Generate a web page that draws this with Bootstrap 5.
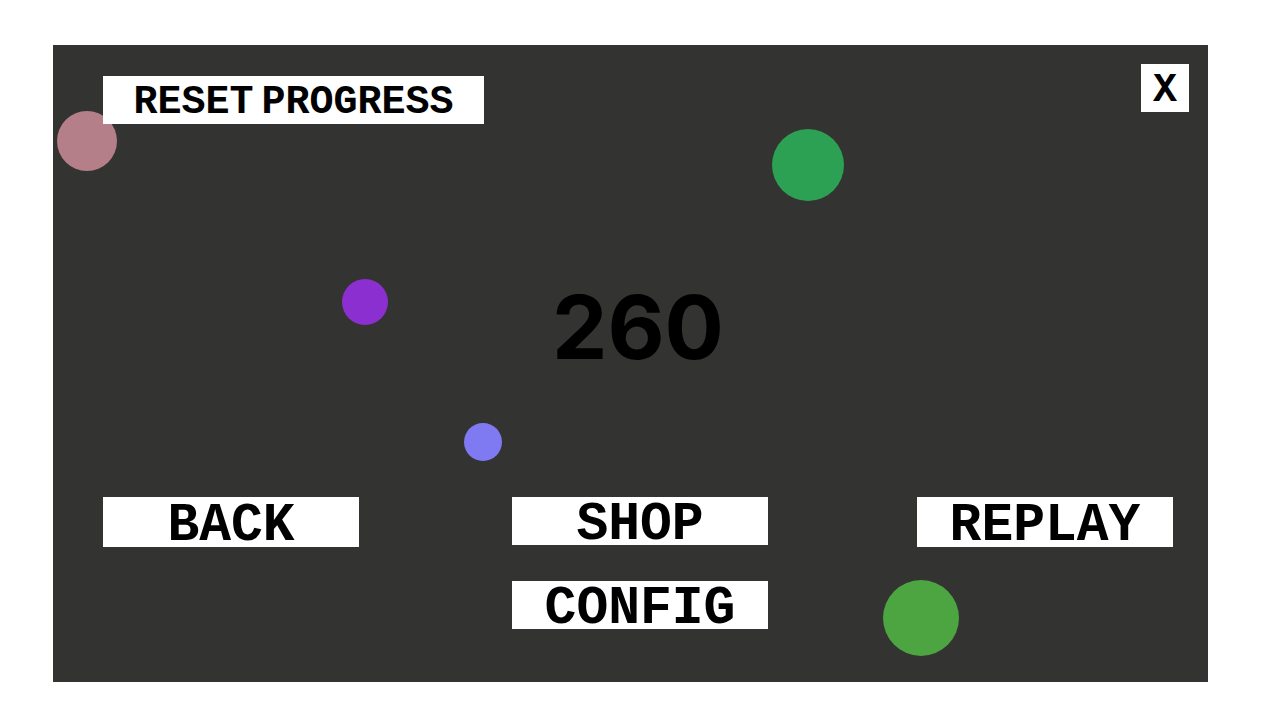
<!DOCTYPE html>
<html lang="en">
<head>
<meta charset="utf-8">
<meta name="viewport" content="width=device-width, initial-scale=1">
<title>Score</title>
<link href="https://cdn.jsdelivr.net/npm/bootstrap@5.3.0/dist/css/bootstrap.min.css" rel="stylesheet">
<style>
  .page { padding: 45px 72px 38px 53px; background: #fff; }
  .stage { background: #333331; }
  .stage-top { padding: 19px 19px 0 50px; }
  .stage-score { padding: 32px 35px 0 50px; }
  .stage-menu { padding: 0 35px 53px 50px; }
  .game-btn {
    --bs-btn-color: #000; --bs-btn-bg: #fff;
    --bs-btn-hover-color: #000; --bs-btn-hover-bg: #e4e4e4;
    --bs-btn-active-color: #000; --bs-btn-active-bg: #d0d0d0;
    height: 48px; padding: 6px 0 0; border: 0; border-radius: 0;
    font: 700 40px/40px "Liberation Mono", monospace;
    white-space: nowrap;
  }
  .btn-menu { width: 256px; font-size: 53px; padding-top: 8px; }
  .btn-tall { height: 50px; }
  .btn-reset { width: 381px; margin-top: 12px; }
  .btn-close-game { width: 48px; }
  .menu-middle { gap: 36px; }
  .score { font: 700 88px/88px Inter, sans-serif; color: #000; }
</style>
</head>
<body>
<div class="page d-flex min-vh-100">
  <main class="stage position-relative d-flex flex-column flex-grow-1">
    <svg class="position-absolute top-0 start-0 w-100 h-100" viewBox="0 0 1155 637" aria-hidden="true">
      <circle cx="34" cy="96" r="30" fill="#b57f8a"/>
      <circle cx="755" cy="120" r="36" fill="#2ca154"/>
      <circle cx="312" cy="257" r="23" fill="#8c2fd0"/>
      <circle cx="430" cy="397" r="19" fill="#7f7af2"/>
      <circle cx="868" cy="573" r="38" fill="#4ca540"/>
    </svg>
    <header class="stage-top position-relative d-flex justify-content-between align-items-start">
      <button type="button" class="btn game-btn btn-reset d-flex justify-content-center align-items-center gap-2"><span>RESET</span> <span>PROGRESS</span></button>
      <button type="button" class="btn game-btn btn-close-game d-flex justify-content-center align-items-center">X</button>
    </header>
    <div class="stage-score position-relative d-flex flex-grow-1 justify-content-center align-items-center">
      <output class="score">260</output>
    </div>
    <nav class="stage-menu position-relative d-flex justify-content-between align-items-start">
      <button type="button" class="btn game-btn btn-menu btn-tall d-flex justify-content-center align-items-center">BACK</button>
      <div class="menu-middle d-flex flex-column ms-1">
        <button type="button" class="btn game-btn btn-menu d-flex justify-content-center align-items-center">SHOP</button>
        <button type="button" class="btn game-btn btn-menu d-flex justify-content-center align-items-center">CONFIG</button>
      </div>
      <button type="button" class="btn game-btn btn-menu btn-tall d-flex justify-content-center align-items-center">REPLAY</button>
    </nav>
  </main>
</div>
<script src="https://cdn.jsdelivr.net/npm/bootstrap@5.3.0/dist/js/bootstrap.bundle.min.js"></script>
</body>
</html>
